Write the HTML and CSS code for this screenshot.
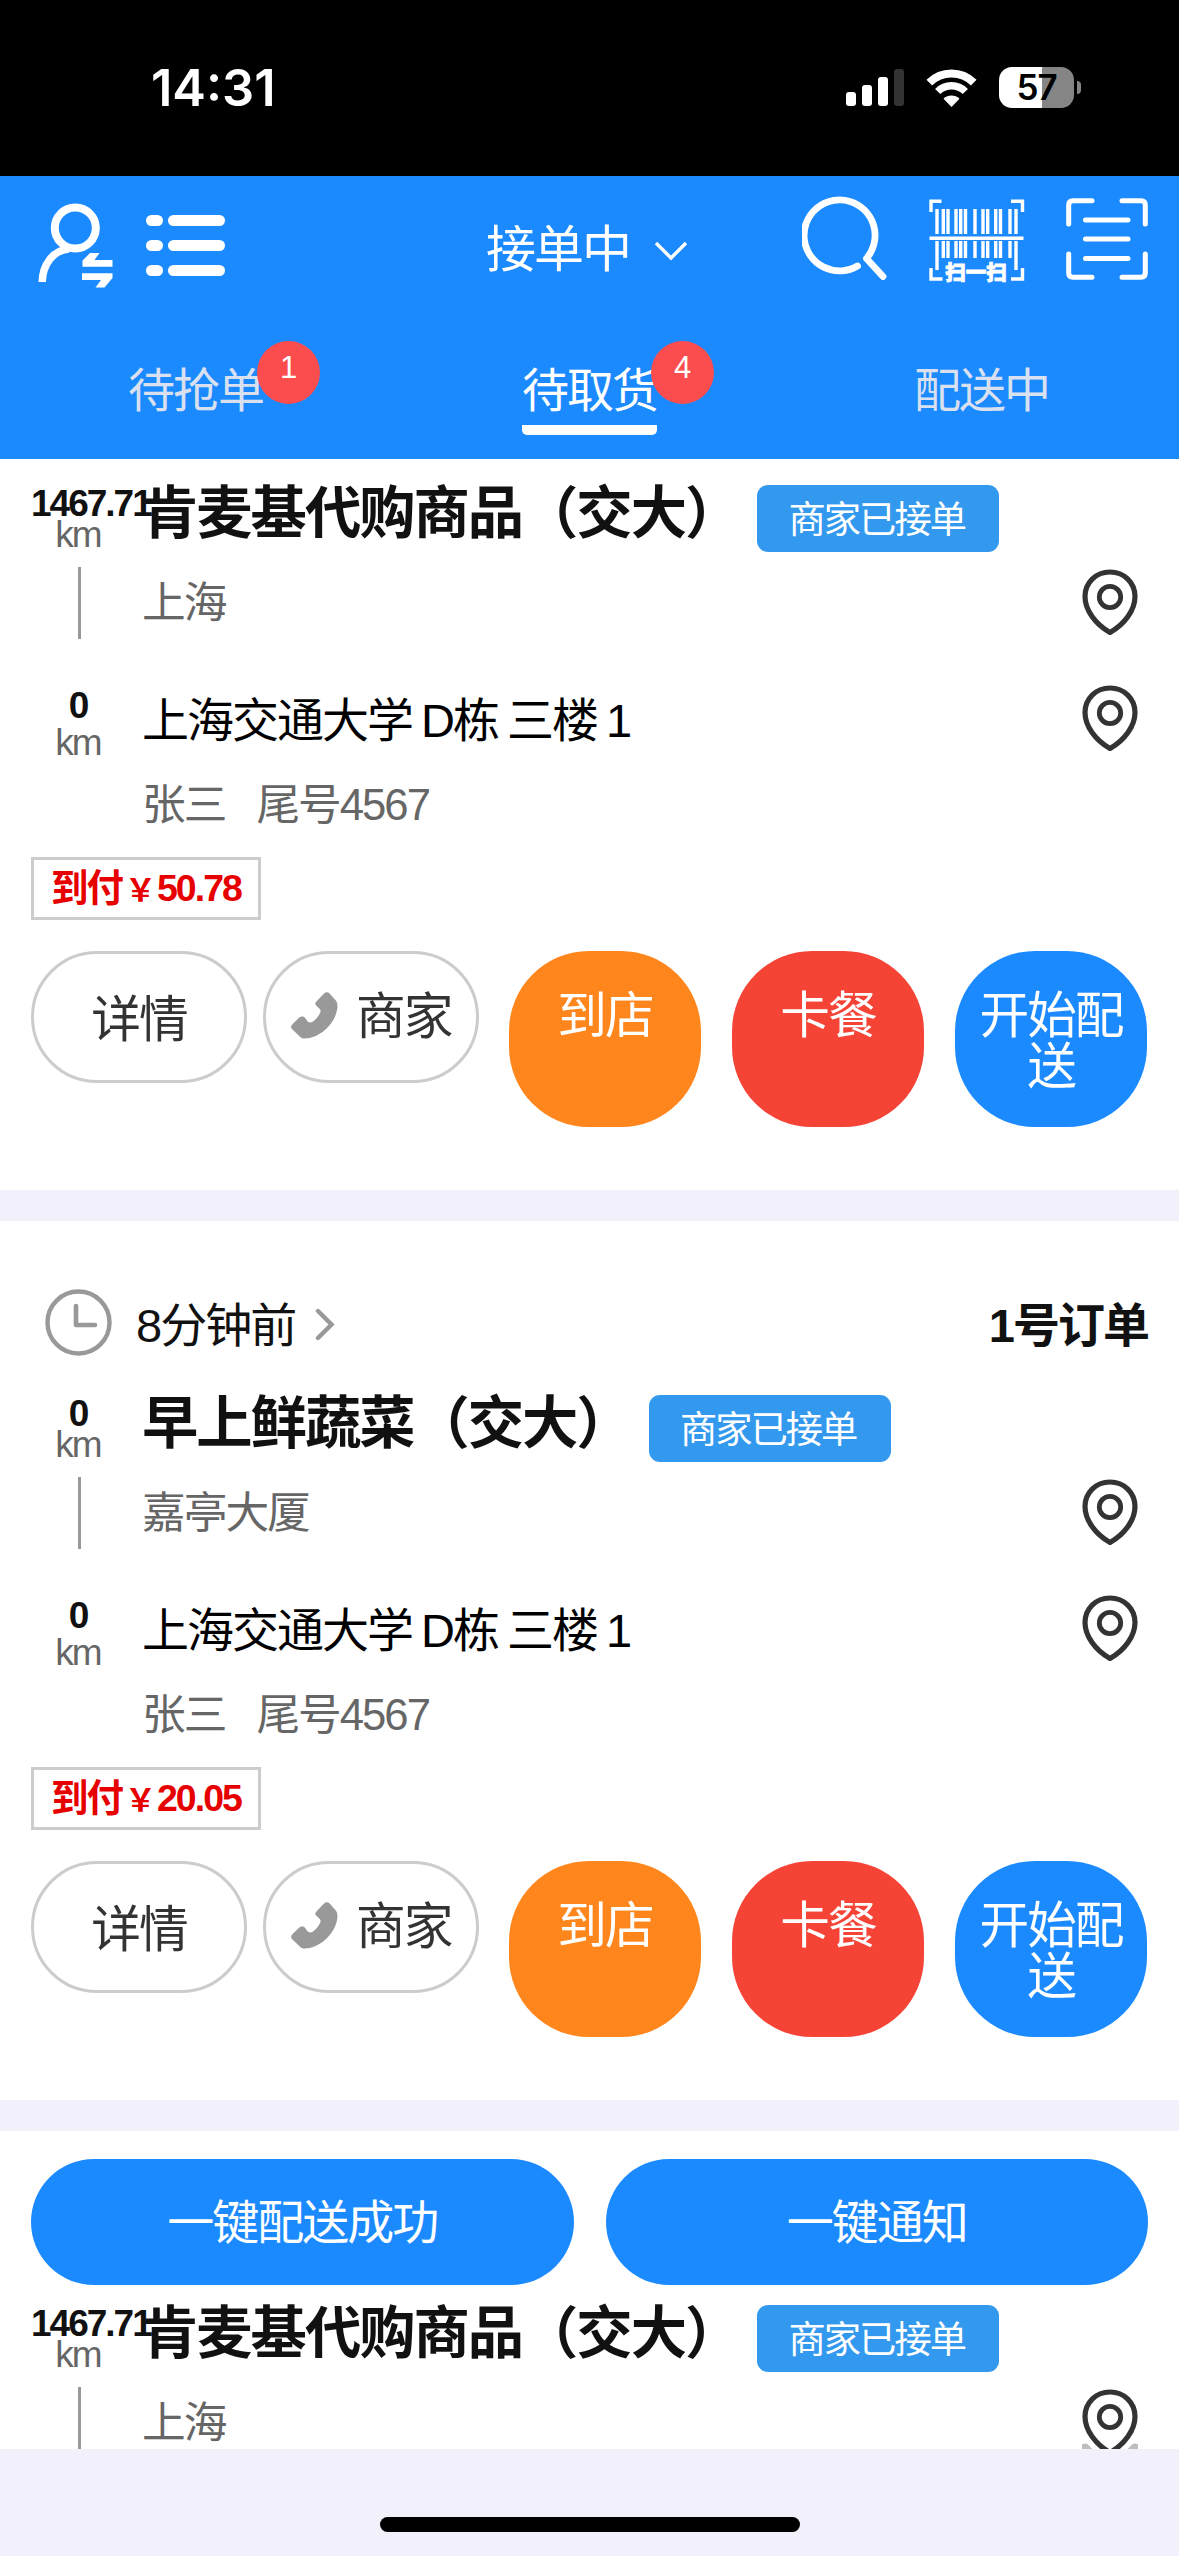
FILE: index.html
```html
<!DOCTYPE html>
<html lang="zh-CN">
<head>
<meta charset="utf-8">
<title>待取货</title>
<link rel="stylesheet" href="styles.css">
</head>
<body>
<svg class="defs" aria-hidden="true">
  <symbol id="pin" viewBox="0 0 56 67">
    <path d="M28 3C13.8 3 3 13.800 3 27.500C3 41 13.500 55.500 28 63.500C42.500 55.500 53 41 53 27.500C53 13.800 42.200 3 28 3Z" fill="none" stroke="#333" stroke-width="5.200" stroke-linejoin="round"/>
    <circle cx="28" cy="28" r="10.700" fill="none" stroke="#333" stroke-width="4.800"/>
  </symbol>
  <symbol id="phone" viewBox="0 0 47 47">
    <path d="M33 1.500C34.800 -.2 37 -.2 38.600 1.500L44.800 8.500C47.500 12 46.800 18 44 24.500C39 36 27 46 14 46.500C11.500 46.600 10 45.800 8.500 44.200L1.200 37.300C-.3 35.800 -.3 34.200 1.200 32.600L8 25.800C10 24 12.500 24 14 25.800L16.500 29.300C18 31 20.500 30.600 22 29.500C25.500 27 28 23.500 29.300 20.200C30 18.500 29.500 17.500 28.200 16.400L25.200 13.600C23.800 12.200 24 10.800 25.400 9.400Z" fill="#999"/>
  </symbol>
</svg>

<div class="screen">
  <div class="status">
    <span class="time">14:31</span>
    <div class="status-icons">
      <svg width="58" height="37" viewBox="0 0 58 37" fill="#fff">
        <rect y="23" width="10" height="14" rx="3"/><rect x="16" y="16" width="10" height="21" rx="3"/>
        <rect x="32" y="8" width="10" height="29" rx="3"/><rect x="48" width="10" height="37" rx="3" fill="#333"/>
      </svg>
      <svg class="wifi" width="51" height="38" viewBox="0 0 51 38" fill="none" stroke="#fff">
        <path d="M3.300 13.700A31.500 31.500 0 0 1 47.700 13.700" stroke-width="8"/>
        <path d="M11.700 22.500A19.500 19.500 0 0 1 39.300 22.500" stroke-width="7.400"/>
        <path d="M25.500 38L17.500 29.800A11.500 11.500 0 0 1 33.500 29.800Z" fill="#fff" stroke="none"/>
      </svg>
      <div class="battery"><span>57</span></div>
      <i class="battery-tip"></i>
    </div>
  </div>

  <header class="head">
    <div class="toolbar">
      <svg class="ic-user" width="76" height="86" viewBox="0 0 76 86">
        <circle cx="37.300" cy="25" r="20.500" fill="none" stroke="#fff" stroke-width="8"/>
        <path d="M4.200 79C4.500 62 15 47 31 46" fill="none" stroke="#fff" stroke-width="7.500"/>
        <path d="M44.500 63.800V57.500L52 50H61.500L56.500 57H74.500V63.800ZM44 70.200H74.500V75L66.500 84.500H57.500L63 77H44Z" fill="#fff"/>
      </svg>
      <svg class="ic-list" width="80" height="62" viewBox="0 0 80 62" fill="#fff">
        <rect y="0" width="17" height="11" rx="5.500"/><rect x="22" y="0" width="57" height="11" rx="5.500"/>
        <rect y="25" width="17" height="11" rx="5.500"/><rect x="22" y="25" width="57" height="11" rx="5.500"/>
        <rect y="50" width="17" height="11" rx="5.500"/><rect x="22" y="50" width="57" height="11" rx="5.500"/>
      </svg>
      <div class="work"><span>接单中</span>
        <svg width="34" height="20" viewBox="0 0 34 20"><path d="M2 2L17 17L32 2" fill="none" stroke="#fff" stroke-width="3.400"/></svg>
      </div>
      <svg class="ic-search" width="86" height="86" viewBox="0 0 86 86" fill="none" stroke="#fff" stroke-width="6.800" stroke-linecap="round" stroke-linejoin="round">
        <path d="M55.500 72A35.500 35.500 0 1 1 64.500 64.500L81 82.500"/>
      </svg>
      <svg class="ic-code" width="96" height="86" viewBox="0 0 96 86">
        <g fill="none" stroke="#fff" stroke-width="3.400">
          <path d="M2 13V2.200H12.500M82 2.200H93.500V13M2 69V80H13.500M82 80H93.500V69"/>
          <path d="M0.500 39.200H94.500"/>
          <path d="M8 10V35M14.300 10V35M19 10V35M27 10V35M31.700 10V35M36.500 10V35M46 10V35M54 10V35M58.700 10V35M66.700 10V35M71.500 10V35M81 10V35M87 10V35"/>
          <path d="M8 42V71M14.300 42V59M19 42V59M27 42V59M31.700 42V59M36.500 42V59M46 42V59M54 42V59M58.700 42V59M66.700 42V59M71.500 42V59M81 42V59M87 42V71"/>
        </g>
        <text class="code-text" x="47" y="81" text-anchor="middle">扫一扫</text>
      </svg>
      <svg class="ic-scan" width="82" height="82" viewBox="0 0 82 82" fill="none" stroke="#fff" stroke-width="5" stroke-linecap="round">
        <path d="M2.700 26V7Q2.700 2.700 7 2.700H26M56 2.700H75Q79.300 2.700 79.300 7V26M2.700 56V75Q2.700 79.300 7 79.300H26M56 79.300H75Q79.300 79.300 79.300 75V56"/>
        <path d="M19.500 22H62M19.500 41H62M19.500 60.500H62"/>
      </svg>
    </div>
    <nav class="tabs">
      <a class="tab"><span class="tab-label">待抢单<b class="count">1</b></span></a>
      <a class="tab active"><span class="tab-label">待取货<b class="count">4</b></span></a>
      <a class="tab"><span class="tab-label">配送中</span></a>
    </nav>
  </header>

  <main class="list">
    <section class="order">
      <div class="stop from">
        <div class="dist"><b>1467.71</b><span>km</span><i></i></div>
        <div class="info">
          <div class="title"><h2>肯麦基代购商品（交大）</h2><em>商家已接单</em></div>
          <p class="sub">上海</p>
        </div>
        <svg class="pin"><use href="#pin"/></svg>
      </div>
      <div class="stop to">
        <div class="dist"><b>0</b><span>km</span></div>
        <div class="info"><p class="addr">上海交通大学 D栋 三楼 1</p><p class="sub who"><span>张三</span><span>尾号4567</span></p></div>
        <svg class="pin"><use href="#pin"/></svg>
      </div>
      <div class="pay">到付<span>￥</span>50.78</div>
      <div class="actions">
        <button class="line detail">详情</button>
        <button class="line call"><svg class="phone"><use href="#phone"/></svg>商家</button>
        <button class="fill orange">到店</button>
        <button class="fill red">卡餐</button>
        <button class="fill blue">开始配送</button>
      </div>
    </section>

    <section class="order">
      <div class="order-head">
        <svg width="67" height="67" viewBox="0 0 67 67" fill="none" stroke="#999" stroke-linecap="round" stroke-linejoin="round">
          <circle cx="33.500" cy="33.500" r="31" stroke-width="4.400"/><path d="M31 17V36H50" stroke-width="4.600"/>
        </svg>
        <span class="ago">8分钟前</span>
        <svg class="more" width="20" height="33" viewBox="0 0 20 33"><path d="M3 3L16.500 16.500L3 30" fill="none" stroke="#999" stroke-width="4.400" stroke-linecap="round"/></svg>
        <strong>1号订单</strong>
      </div>
      <div class="stop from">
        <div class="dist"><b>0</b><span>km</span><i></i></div>
        <div class="info">
          <div class="title"><h2>早上鲜蔬菜（交大）</h2><em>商家已接单</em></div>
          <p class="sub">嘉亭大厦</p>
        </div>
        <svg class="pin"><use href="#pin"/></svg>
      </div>
      <div class="stop to">
        <div class="dist"><b>0</b><span>km</span></div>
        <div class="info"><p class="addr">上海交通大学 D栋 三楼 1</p><p class="sub who"><span>张三</span><span>尾号4567</span></p></div>
        <svg class="pin"><use href="#pin"/></svg>
      </div>
      <div class="pay">到付<span>￥</span>20.05</div>
      <div class="actions">
        <button class="line detail">详情</button>
        <button class="line call"><svg class="phone"><use href="#phone"/></svg>商家</button>
        <button class="fill orange">到店</button>
        <button class="fill red">卡餐</button>
        <button class="fill blue">开始配送</button>
      </div>
    </section>

    <section class="order">
      <div class="batch"><button>一键配送成功</button><button>一键通知</button></div>
      <div class="stop from">
        <div class="dist"><b>1467.71</b><span>km</span><i></i></div>
        <div class="info">
          <div class="title"><h2>肯麦基代购商品（交大）</h2><em>商家已接单</em></div>
          <p class="sub">上海</p>
        </div>
        <svg class="pin" viewBox="0 0 56 67"><path d="M0 55.500Q4 53 7 56.500L12 62H0ZM56 55.500Q52 53 49 56.500L44 62H56Z" fill="#bdbdbd"/><use href="#pin" width="56" height="67"/></svg>
      </div>
    </section>
  </main>
  <footer class="foot"><i></i></footer>
</div>
</body>
</html>
```
FILE: styles.css
```css
* { box-sizing: border-box; margin: 0; padding: 0; }
body {
  width: 1179px;
  height: 2556px;
  overflow: hidden;
  font-family: "Liberation Sans", "Noto Sans CJK SC", sans-serif;
  letter-spacing: -2px;
  background: #f2f0fb;
}
svg { display: block; flex: none; }
i, em { font-style: normal; }
button { font: inherit; letter-spacing: inherit; border: 0; background: none; display: block; }
.defs { position: absolute; width: 0; height: 0; }
.screen { display: flex; flex-direction: column; height: 2556px; }

/* status bar */
.status {
  height: 176px;
  background: #000;
  color: #fff;
  display: flex;
  justify-content: space-between;
  padding: 67px 98px 0 151px;
}
.time { font: 600 50.500px/42px Inter, sans-serif; letter-spacing: 0; }
.status-icons { display: flex; align-items: flex-start; height: 41px; }
.status-icons > svg { margin-top: 2px; }
.wifi { margin-left: 22px; }
.battery {
  margin-left: 22px;
  width: 75px;
  height: 41px;
  border-radius: 13px;
  background: linear-gradient(90deg, #fff 43px, #858585 43px);
  text-align: center;
}
.battery span { font: 600 35px/41px Inter, sans-serif; letter-spacing: -1px; color: #000; }
.battery-tip { width: 4px; height: 13px; margin: 14px 0 0 3px; border-radius: 0 5px 5px 0; background: #858585; }

/* header */
.head { height: 283px; flex: none; background: #1c8aff; color: #fff; }
.toolbar { height: 144px; display: flex; align-items: flex-start; padding: 0 31px 0 38px; }
.ic-user { margin-top: 27px; }
.ic-list { margin: 39px 0 0 32px; }
.work { display: flex; align-items: center; margin: 44px 0 0 260px; font-size: 50px; line-height: 60px; }
.work svg { margin: 2px 0 0 24px; }
.ic-search { margin: 18px 0 0 114px; }
.ic-code { margin: 23px 0 0 41px; overflow: visible; }
.code-text { font: 900 20.500px "Noto Sans CJK SC", sans-serif; letter-spacing: 0; fill: #fff; stroke: #fff; stroke-width: .8px; }
.ic-scan { margin: 22px 0 0 41px; }
.tabs { display: grid; grid-template-columns: repeat(3, 1fr); }
.tab { display: flex; justify-content: center; padding: 41px 2px 0 0; color: #d9e0f0; font-size: 47px; line-height: 60px; }
.tab-label { position: relative; height: 74px; }
.active { color: #fff; padding-right: 0; }
.active .tab-label { border-bottom: 10px solid #fff; border-radius: 5px; }
.count {
  position: absolute;
  left: 129px;
  top: -20px;
  width: 63px;
  height: 63px;
  border-radius: 50%;
  background: #fb4d4e;
  color: #fff;
  font-weight: 400;
  font-size: 31px;
  line-height: 54px;
  text-align: center;
  letter-spacing: 0;
}

/* orders */
.list { flex: none; height: 1990px; overflow: hidden; display: flex; flex-direction: column; gap: 31px; }
.order { flex: none; background: #fff; padding-left: 31px; padding-right: 31px; }
.order:first-child { height: 731px; padding-top: 26px; }
.order:nth-child(2) { height: 879px; }
.order-head { height: 174px; display: flex; align-items: center; padding: 28px 0 0 14px; font-size: 47px; line-height: 60px; color: #111; }
.ago { margin: 8px 0 0 24px; }
.more { margin: 4px 0 0 20px; }
.order-head strong { margin: 8px 0 0 auto; }
.stop { display: flex; align-items: flex-start; }
.from { height: 203px; }
.to { height: 169px; }
.dist { width: 94px; flex: none; display: flex; flex-direction: column; align-items: center; font-size: 37px; line-height: 31px; white-space: nowrap; padding-top: 3px; color: #111; }
.dist b { max-width: 94px; }
.dist span { color: #666; }
.dist i { width: 3px; height: 72px; margin: 17px 0 0 2px; background: #999; }
.to .dist { padding-top: 2px; }
.to .dist span { margin-top: 6px; }
.info { flex: 1; padding-left: 17px; }
.title { display: flex; height: 67px; }
.title h2 { font-size: 56.300px; line-height: 58px; font-weight: 700; color: #111; }
.title em { width: 242px; height: 67px; margin-left: 18px; padding-right: 3px; border-radius: 11px; background: #3399ee; color: #fff; font-size: 37.300px; line-height: 71px; text-align: center; }
.sub { font-size: 43.700px; line-height: 50px; color: #666; margin-top: 26px; }
.addr { font-size: 47px; line-height: 50px; color: #000; padding-top: 8px; word-spacing: -2px; }
.to .sub { margin-top: 34px; }
.who { display: flex; gap: 31px; }
.pin { width: 56px; height: 67px; margin: 84px 10px 0 0; }
.to .pin { margin-top: -3px; }
.pay { width: 230px; height: 63px; border: 3px solid #ccc; color: #e60000; font-weight: 700; font-size: 37.500px; line-height: 57px; padding-left: 17px; white-space: nowrap; }
.pay span { font-size: 31px; padding: 0 3px; }
.actions { display: flex; align-items: flex-start; margin-top: 31px; color: #333; font-size: 49.700px; line-height: 51px; }
.line { width: 216px; height: 132px; border: 3px solid #ccc; border-radius: 66px; color: #333; }
.detail { padding-top: 7px; }
.call { margin-left: 16px; display: flex; align-items: center; padding-left: 25px; }
.phone { width: 47px; height: 47px; margin: -4px 18px 0 0; }
.fill { width: 192px; height: 176px; border-radius: 80px; color: #fff; padding: 40px 20px 0; display: flex; justify-content: center; text-align: center; }
.orange { margin-left: 30px; background: #ff861c; }
.red { margin: 0 31px; background: #f54336; }
.blue { background: #1c8aff; }

/* batch bar */
.batch { display: flex; gap: 32px; padding-top: 28px; height: 174px; }
.batch button { flex: 1; height: 126px; border-radius: 63px; background: #1c8aff; color: #fff; font-size: 47px; line-height: 128px; }

.foot { height: 107px; display: flex; justify-content: center; padding-top: 68px; }
.foot i { width: 420px; height: 15px; border-radius: 8px; background: #000; }
```
